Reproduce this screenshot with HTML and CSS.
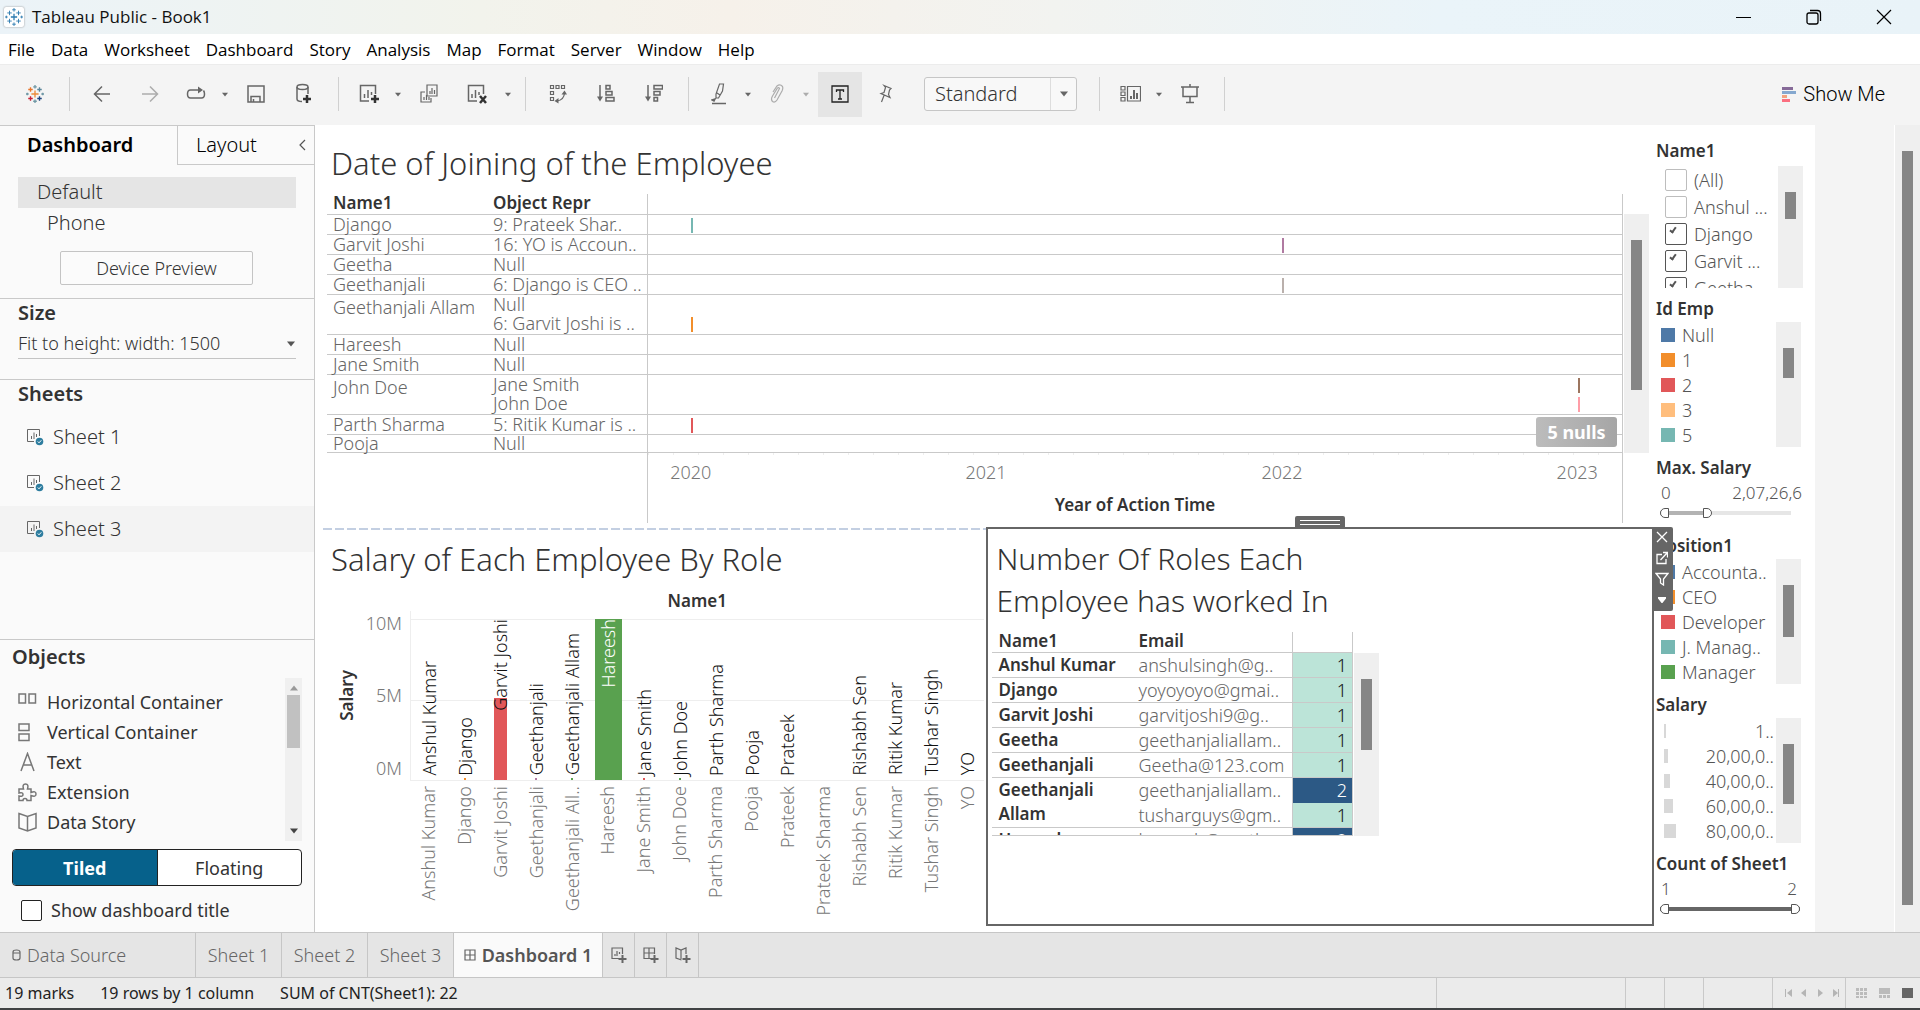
FILE: index.html
```html
<!DOCTYPE html>
<html lang="en">
<head>
<meta charset="utf-8">
<title>Tableau Public - Book1</title>
<link rel="stylesheet" href="styles.css">
</head>
<body>
<svg class="defs" aria-hidden="true">
  <symbol id="caret" viewBox="0 0 8 6"><path d="M0 0.500h8L4 5.500z" fill="currentColor"/></symbol>
  <symbol id="sheet" viewBox="0 0 18 18"><path d="M8 13.500H1.500v-12h12V8M5.500 11V8M8 11V4.500M10.500 9V6" fill="none" stroke="#666"/><circle cx="13.500" cy="13.500" r="3.800" fill="#2e7d9f"/><path d="M11.800 13.500l1.200 1.300 2.300-2.500" fill="none" stroke="#fff"/></symbol>
  <symbol id="marks" viewBox="0 0 20 20"><path d="M10 6.500v7M6.500 10h7" stroke-width="1.400"/><path d="M5 3v5M2.500 5.500h5M15 3v5M12.500 5.500h5M5 12v5M2.500 14.500h5M15 12v5M12.500 14.500h5M10 0v4M8 2h4M10 16v4M8 18h4M1.500 8.500v3M0 10h3M18.500 8.500v3M17 10h3" /></symbol>
</svg>

<header class="titlebar">
  <svg class="app-icon" width="20" height="20" stroke="#2b7bb0"><use href="#marks"/></svg>
  <span class="title">Tableau Public - Book1</span>
  <div class="window-buttons">
    <button aria-label="Minimize"><svg width="16" height="16"><path d="M0 8.500h15" stroke="#000"/></svg></button>
    <button aria-label="Restore"><svg width="16" height="16" fill="none" stroke="#000" stroke-width="1.300"><rect x="1" y="4" width="11" height="11" rx="2"/><path d="M4 1.500h7.500q3 0 3 3V12"/></svg></button>
    <button aria-label="Close"><svg width="16" height="16"><path d="M1 1l14 14M15 1L1 15" stroke="#000" stroke-width="1.200"/></svg></button>
  </div>
</header>

<nav class="menubar">
  <a href="#">File</a><a href="#">Data</a><a href="#">Worksheet</a><a href="#">Dashboard</a><a href="#">Story</a><a href="#">Analysis</a><a href="#">Map</a><a href="#">Format</a><a href="#">Server</a><a href="#">Window</a><a href="#">Help</a>
</nav>

<div class="toolbar">
  <button class="tool home" aria-label="Start page"><svg width="18" height="22" viewBox="0 0 20 20" fill="none" stroke-width="1.500"><path d="M10 6v8M6 10h8" stroke="#eb8a3a"/><path d="M5 2.500v5M2.500 5h5" stroke="#e8762c"/><path d="M15 2.500v5M12.500 5h5" stroke="#5b879b"/><path d="M5 12.500v5M2.500 15h5" stroke="#c72035"/><path d="M15 12.500v5M12.500 15h5" stroke="#1f447e"/><path d="M10 0v4M8 2h4M10 16v4M8 18h4M1.500 8.500v3M0 10h3M18.500 8.500v3M17 10h3" stroke="#7199a6"/></svg></button>
  <span class="sep"></span>
  <button class="tool" aria-label="Back"><svg width="18" height="18"><path d="M17 9H2M9 1.500L1.500 9 9 16.500"/></svg></button>
  <button class="tool off" aria-label="Forward"><svg width="18" height="18"><path d="M1 9h15M9 1.500L16.500 9 9 16.500"/></svg></button>
  <button class="tool mid" aria-label="Redo"><svg width="20" height="16"><path d="M12 4H4.500Q1.500 4 1.500 8t3 4h11q3 0 3-4 0-2-1-3.500M10 4h3"/><path d="M12 .500l5 3.500-5 3.500z" class="solid"/></svg></button>
  <button class="drop" aria-label="Redo options"><svg width="6" height="5"><use href="#caret"/></svg></button>
  <button class="tool" aria-label="Save"><svg width="18" height="18"><path d="M1 1h16v16H1zM4 17v-5.500h9V17M6.500 14v3"/></svg></button>
  <button class="tool" aria-label="New data source"><svg width="18" height="22"><ellipse cx="7.500" cy="4" rx="5.500" ry="2.500"/><path d="M2 4v12q0 2.500 5 2.500M13 4v7"/><path d="M12 12v8M8 16h8" class="thick"/></svg></button>
  <span class="sep"></span>
  <button class="tool mid" aria-label="New worksheet"><svg width="21" height="20"><path d="M10 17H1.500V1.500h15V10M5.500 14v-4M9 14V6M12.500 11V8"/><path d="M16 11v8M12 15h8" class="thick"/></svg></button>
  <button class="drop" aria-label="New worksheet options"><svg width="6" height="5"><use href="#caret"/></svg></button>
  <button class="tool" aria-label="Duplicate"><svg width="18" height="20"><path d="M7 1h10v11H7zM10 10V7M12 10V4M14.500 10V6M5 8H1v10h10v-4M4 16v-3M6.500 16v-5M9 16v-3" stroke-width="1.200"/></svg></button>
  <button class="tool" aria-label="Clear"><svg width="20" height="22"><path d="M10 18H1.500V2.500h15V11M5 15v-4M8.500 15V7M12 12V9"/><path d="M13 13l6 7M19 13l-6 7" class="thick"/></svg></button>
  <button class="drop" aria-label="Clear options"><svg width="6" height="5"><use href="#caret"/></svg></button>
  <span class="sep"></span>
  <button class="tool" aria-label="Swap rows and columns"><svg width="18" height="20"><path d="M1.500 1.500h3v3h-3zM7 1.500h3v3H7zM12.500 1.500h3v3h-3zM1.500 7.500h3v3h-3zM1.500 13.500h3v3h-3zM8 17q7-1 7.500-8" stroke-width="1.200"/><path d="M12.500 10.500l3-4 2.500 4zM9.500 14l-4 3 4 2.500z" class="solid"/></svg></button>
  <button class="tool" aria-label="Sort ascending"><svg width="18" height="20"><path d="M3 1v14M9 1.500h4v3.500H9zM9 7.500h6V11H9zM9 13.500h8V17H9z"/><path d="M0 12.500h6l-3 5z" class="solid"/></svg></button>
  <button class="tool" aria-label="Sort descending"><svg width="18" height="20"><path d="M3 1v14M9 1.500h8.500v3.500H9zM9 7.500h6V11H9zM9 13.500h3.500V17H9z"/><path d="M0 12.500h6l-3 5z" class="solid"/></svg></button>
  <span class="sep"></span>
  <button class="tool mid" aria-label="Highlight"><svg width="16" height="22"><path d="M8.500 1h4l-1 7-4 7H5V11zM6 10l3 2" stroke-width="1.200"/><path d="M1 17l3-1-1 2zM1 20.500h14" /></svg></button>
  <button class="drop" aria-label="Highlight options"><svg width="6" height="5"><use href="#caret"/></svg></button>
  <button class="tool mid off" aria-label="Group"><svg width="14" height="20"><path d="M3 8l4-6q3-2.500 5.500.500.800 2-.500 4.500L7 16q-2 3-4.500 1.500Q.500 15.500 2.500 12l5-8q1.500-1 2 .500L4.500 14" stroke-width="1.200"/></svg></button>
  <button class="drop off" aria-label="Group options"><svg width="6" height="5"><use href="#caret"/></svg></button>
  <button class="tool mid pressed" aria-label="Show labels"><svg width="18" height="20"><path d="M1 2h16v16H1zM5.500 8V6h7v2M9 6v9M7 15h4" stroke="#222" stroke-width="1.300"/></svg></button>
  <button class="tool" aria-label="Pin"><svg width="16" height="20"><path d="M6 1.500l7 3-1.500 1.500-1 4.500 1.500 3-9-4 3-1 1.500-5zM6 11.500L3.500 18" stroke-width="1.200"/></svg></button>
  <span class="fit">
    <select aria-label="Fit"><option>Standard</option></select>
    <svg width="8" height="6"><use href="#caret"/></svg>
  </span>
  <span class="sep"></span>
  <button class="tool mid" aria-label="Show cards"><svg width="21" height="18"><path d="M1 1.500h4v3.500H1zM1 7h4v3.500H1zM1 12.500h4V16H1zM7.500 1.500h13V16h-13z" stroke-width="1.200"/><path d="M11 14v-3M14 14V5M17 14V8" stroke-width="2"/></svg></button>
  <button class="drop" aria-label="Card options"><svg width="6" height="5"><use href="#caret"/></svg></button>
  <button class="tool" aria-label="Presentation mode"><svg width="18" height="20"><path d="M0 3h18M2 3v9.500h14V3M9 0v3M9 12.500V18M5 18.500h8"/></svg></button>
  <span class="sep"></span>
  <button class="show-me"><svg width="14" height="15"><path d="M0 0h11v3H0z" fill="#866a98"/><path d="M0 4h14v3H0z" fill="#85a8cf"/><path d="M0 8h5v3H0z" fill="#f2a27e"/><path d="M0 12h8v3H0z" fill="#fb6f80"/></svg>Show Me</button>
</div>

<div class="workspace">
  <aside class="sidebar">
    <div class="pane-tabs">
      <button class="pane-tab active">Dashboard</button>
      <button class="pane-tab">Layout<svg width="7" height="12"><path d="M6 1L1 6l5 5" fill="none" stroke="#555" stroke-width="1.200"/></svg></button>
    </div>
    <div class="devices">
      <div class="device chosen">Default</div>
      <div class="device phone">Phone</div>
      <button class="preview">Device Preview</button>
    </div>
    <section class="size">
      <h2><label for="size">Size</label></h2>
      <div class="size-box"><select id="size"><option>Fit to height: width: 1500</option></select><svg width="8" height="6"><use href="#caret"/></svg></div>
    </section>
    <section class="sheets">
      <h2>Sheets</h2>
      <a class="sheet" href="#"><svg width="18" height="18"><use href="#sheet"/></svg>Sheet 1</a>
      <a class="sheet" href="#"><svg width="18" height="18"><use href="#sheet"/></svg>Sheet 2</a>
      <a class="sheet hover" href="#"><svg width="18" height="18"><use href="#sheet"/></svg>Sheet 3</a>
    </section>
    <section class="objects">
      <h2>Objects</h2>
      <div class="object-box">
        <ul>
          <li><svg width="20" height="20"><path d="M1 2h6.500v9H1zM11 2h6.500v9H11z"/></svg>Horizontal Container</li>
          <li><svg width="20" height="20"><path d="M1 2h10v6.500H1zM1 12h10v6.500H1z"/></svg>Vertical Container</li>
          <li><svg width="20" height="20"><path d="M3 19L9.500 1.500 16 19M5.500 13h8"/></svg>Text</li>
          <li><svg width="20" height="20"><path d="M1 7h4.500Q4 2 7.500 2T9.500 7H13v3.500q5-2 5 1.500t-5 1.500V18.500H9q0-2-2-2t-2 2H1V14q4 1 4-1.500T1 11z"/></svg>Extension</li>
          <li><svg width="20" height="20"><path d="M1 1.500l8.500 3 8.500-3v14.500l-8.500 3-8.500-3zM9.500 4.500V19"/></svg>Data Story</li>
        </ul>
        <div class="list-scroll"><svg width="8" height="6" class="up"><use href="#caret"/></svg><span></span><svg width="8" height="6" class="down"><use href="#caret"/></svg></div>
      </div>
      <div class="mode"><button class="on">Tiled</button><button>Floating</button></div>
      <label class="show-title"><input type="checkbox">Show dashboard title</label>
    </section>
  </aside>

  <main class="canvas">
    <div class="dashboard">
      <div class="views">
        <section class="joining">
          <h1>Date of Joining of the Employee</h1>
          <div class="with-scroll">
            <table class="timeline">
              <colgroup><col class="c-name"><col class="c-repr"><col></colgroup>
              <thead><tr><th>Name1</th><th>Object Repr</th><th class="pane"></th></tr></thead>
              <tbody>
                <tr><td>Django</td><td>9: Prateek Shar..</td><td class="pane"><i class="teal" style="left:4.5%"></i></td></tr>
                <tr><td>Garvit Joshi</td><td>16: YO is Accoun..</td><td class="pane"><i class="purple" style="left:65.1%"></i></td></tr>
                <tr><td>Geetha</td><td>Null</td><td class="pane"></td></tr>
                <tr><td>Geethanjali</td><td>6: Django is CEO ..</td><td class="pane"><i class="grey" style="left:65.1%"></i></td></tr>
                <tr><td rowspan="2" class="tall">Geethanjali Allam</td><td class="open">Null</td><td class="pane open"></td></tr>
                <tr><td>6: Garvit Joshi is ..</td><td class="pane"><i class="orange" style="left:4.5%"></i></td></tr>
                <tr><td>Hareesh</td><td>Null</td><td class="pane"></td></tr>
                <tr><td>Jane Smith</td><td>Null</td><td class="pane"></td></tr>
                <tr><td rowspan="2" class="tall">John Doe</td><td class="open">Jane Smith</td><td class="pane open"><i class="brown" style="left:95.5%"></i></td></tr>
                <tr><td>John Doe</td><td class="pane"><i class="pink" style="left:95.5%"></i></td></tr>
                <tr><td>Parth Sharma</td><td>5: Ritik Kumar is ..</td><td class="pane"><i class="red" style="left:4.5%"></i></td></tr>
                <tr class="last"><td>Pooja</td><td>Null</td><td class="pane"></td></tr>
              </tbody>
            </table>
            <button class="nulls">5 nulls</button>
            <div class="scroll main-scroll"><span></span></div>
          </div>
          <div class="time-axis">
            <span style="left:4.4%">2020</span><span style="left:34.7%">2021</span><span style="left:65.1%">2022</span><span style="left:95.4%">2023</span>
            <b>Year of Action Time</b>
          </div>
        </section>

        <section class="salary">
          <h1>Salary of Each Employee By Role</h1>
          <div class="chart">
            <div class="chart-head">Name1</div>
            <div class="y-title"><span>Salary</span></div>
            <div class="y-axis"><span>10M</span><span>5M</span><span>0M</span></div>
            <div class="plot">
              <div class="col"><em>Anshul Kumar</em></div>
              <div class="col"><i class="bar dot orange"></i><em>Django</em></div>
              <div class="col"><i class="bar red" style="height:48%;width:13px"></i><em class="mid-bar">Garvit Joshi</em></div>
              <div class="col"><i class="bar dot purple"></i><em>Geethanjali</em></div>
              <div class="col"><i class="bar dot green"></i><em>Geethanjali Allam</em></div>
              <div class="col"><i class="bar green" style="height:95%;width:27px"></i><em class="in-bar">Hareesh</em></div>
              <div class="col"><i class="bar dot red"></i><em>Jane Smith</em></div>
              <div class="col"><i class="bar dot green"></i><em>John Doe</em></div>
              <div class="col"><em>Parth Sharma</em></div>
              <div class="col"><em>Pooja</em></div>
              <div class="col"><em>Prateek</em></div>
              <div class="col"></div>
              <div class="col"><em>Rishabh Sen</em></div>
              <div class="col"><em>Ritik Kumar</em></div>
              <div class="col"><em>Tushar Singh</em></div>
              <div class="col"><em>YO</em></div>
            </div>
            <div class="x-axis">
              <span>Anshul Kumar</span><span>Django</span><span>Garvit Joshi</span><span>Geethanjali</span><span>Geethanjali All..</span><span>Hareesh</span><span>Jane Smith</span><span>John Doe</span><span>Parth Sharma</span><span>Pooja</span><span>Prateek</span><span>Prateek Sharma</span><span>Rishabh Sen</span><span>Ritik Kumar</span><span>Tushar Singh</span><span>YO</span>
            </div>
          </div>
        </section>

        <section class="roles">
          <span class="grip"></span>
          <div class="zone-tools">
            <button aria-label="Remove"><svg width="12" height="12"><path d="M1 1l10 10M11 1L1 11"/></svg></button>
            <button aria-label="Go to sheet"><svg width="12" height="14"><path d="M6 3.500H1v9h9V8M4.500 9L11 2M7 1.500h4.500v5"/></svg></button>
            <button aria-label="Use as filter"><svg width="14" height="14"><path d="M1 1.500h12L8.500 7v6l-3-2V7z"/></svg></button>
            <button aria-label="More options"><svg width="8" height="6"><use href="#caret"/></svg></button>
          </div>
          <h1>Number Of Roles Each<br>Employee has worked In</h1>
          <div class="with-scroll roles-box">
            <div class="clip">
              <table class="counts">
                <colgroup><col class="n"><col class="e"><col class="v"></colgroup>
                <thead><tr><th>Name1</th><th>Email</th><th class="val"></th></tr></thead>
                <tbody>
                  <tr><th>Anshul Kumar</th><td>anshulsingh@g..</td><td class="val">1</td></tr>
                  <tr><th>Django</th><td>yoyoyoyo@gmai..</td><td class="val">1</td></tr>
                  <tr><th>Garvit Joshi</th><td>garvitjoshi9@g..</td><td class="val">1</td></tr>
                  <tr><th>Geetha</th><td>geethanjaliallam..</td><td class="val">1</td></tr>
                  <tr><th>Geethanjali</th><td>Geetha@123.com</td><td class="val">1</td></tr>
                  <tr><th rowspan="2">Geethanjali Allam</th><td class="open">geethanjaliallam..</td><td class="val two open">2</td></tr>
                  <tr><td>tusharguys@gm..</td><td class="val">1</td></tr>
                  <tr><th>Hareesh</th><td>hareesh@exath..</td><td class="val two">2</td></tr>
                </tbody>
              </table>
            </div>
            <div class="scroll"><span></span></div>
          </div>
        </section>
      </div>

      <aside class="legends">
        <section class="filter">
          <h3>Name1</h3>
          <div class="with-scroll names">
            <div class="items">
              <label><input type="checkbox">(All)</label>
              <label><input type="checkbox">Anshul ...</label>
              <label><input type="checkbox" checked>Django</label>
              <label><input type="checkbox" checked>Garvit ...</label>
              <label><input type="checkbox" checked>Geetha</label>
            </div>
            <div class="scroll"><span></span></div>
          </div>
        </section>
        <section>
          <h3>Id Emp</h3>
          <div class="with-scroll ids">
            <ul class="items"><li><i class="blue"></i>Null</li><li><i class="orange"></i>1</li><li><i class="red"></i>2</li><li><i class="peach"></i>3</li><li><i class="teal"></i>5</li></ul>
            <div class="scroll"><span></span></div>
          </div>
        </section>
        <section class="range-section">
          <h3>Max. Salary</h3>
          <div class="values"><span>0</span><span>2,07,26,6</span></div>
          <div class="range part"><input type="range" class="low" min="0" max="100" value="0" aria-label="Minimum salary"><input type="range" class="high" min="0" max="100" value="35" aria-label="Maximum salary"></div>
        </section>
        <section>
          <h3>Position1</h3>
          <div class="with-scroll positions">
            <ul class="items"><li><i class="blue"></i>Accounta..</li><li><i class="orange"></i>CEO</li><li><i class="red"></i>Developer</li><li><i class="teal"></i>J. Manag..</li><li><i class="green"></i>Manager</li></ul>
            <div class="scroll"><span></span></div>
          </div>
        </section>
        <section>
          <h3>Salary</h3>
          <div class="with-scroll sizes">
            <ul class="items"><li><i style="width:2px"></i>1..</li><li><i style="width:4px"></i>20,00,0..</li><li><i style="width:6px"></i>40,00,0..</li><li><i style="width:9px"></i>60,00,0..</li><li><i style="width:12px"></i>80,00,0..</li></ul>
            <div class="scroll"><span></span></div>
          </div>
        </section>
        <section>
          <h3>Count of Sheet1</h3>
          <div class="values"><span>1</span><span>2</span></div>
          <div class="range"><input type="range" class="low" min="0" max="100" value="0" aria-label="Minimum count"><input type="range" class="high" min="0" max="100" value="100" aria-label="Maximum count"></div>
        </section>
      </aside>
    </div>
    <div class="page-scroll"><span></span></div>
  </main>
</div>

<nav class="tabs">
  <a class="source" href="#"><svg width="9" height="12"><path d="M1 3q0-2 3.500-2T8 3v6q0 2-3.500 2T1 9zM1 4h7"/></svg>Data Source</a>
  <a href="#">Sheet 1</a><a href="#">Sheet 2</a><a href="#">Sheet 3</a>
  <a class="current" href="#"><svg width="12" height="12"><path d="M1 1h10v10H1zM6 1v10M1 6h10"/></svg>Dashboard 1</a>
  <button aria-label="New worksheet"><svg width="16" height="16"><path d="M8 11.500H1V1h10.500v6M4 9V7M6 9V4M8.500 7V5"/><path d="M11.500 8v8M7.500 12h8" stroke-width="2"/></svg></button>
  <button aria-label="New dashboard"><svg width="16" height="16"><path d="M8 11.500H1V1h10.500v6M6 1v10M1 6h10.500"/><path d="M11.500 8v8M7.500 12h8" stroke-width="2"/></svg></button>
  <button aria-label="New story"><svg width="16" height="16"><path d="M6.500 13L1 11V1l5 2 5-2v6M6 3v9"/><path d="M11.500 8v8M7.500 12h8" stroke-width="2"/></svg></button>
</nav>

<footer class="status">
  <span>19 marks</span><span>19 rows by 1 column</span><span>SUM of CNT(Sheet1): 22</span>
  <div class="cells">
    <div class="cell-a"></div><div class="cell-b"></div><div class="cell-b"></div><div class="cell-c"></div>
    <div class="cell-nav"><svg width="54" height="8" fill="#b5b5b5"><path d="M0 0h1v8H0zM7 0v8L2 4zM21 0v8l-5-4zM33 0v8l5-4zM48 0v8l5-4zM53 0h1v8h-1z"/></svg></div>
    <div class="cell-view"><svg width="58" height="10"><path d="M0 0h3v3H0zM4 0h3v3H4zM8 0h3v3H8zM0 4h3v3H0zM4 4h3v3H4zM8 4h3v3H8zM0 8h3v2H0zM4 8h3v2H4zM8 8h3v2H8zM23 0h11v6H23zM23 7h3v3h-3zM27 7h3v3h-3zM31 7h3v3h-3z" fill="#bbb"/><path d="M46 0h11v10H46z" fill="#666"/></svg></div>
  </div>
</footer>
</body>
</html>
```
FILE: styles.css
```css
* { box-sizing: border-box; }
body {
  margin: 0; min-height: 100vh; display: flex; flex-direction: column;
  font-family: "Noto Sans", "Open Sans", sans-serif; font-size: 18px; font-weight: 350; line-height: 24px;
  color: #333; background: #fff;
}
h1, h2, h3, ul { margin: 0; padding: 0; font-weight: inherit; }
ul { list-style: none; }
a { color: inherit; text-decoration: none; }
button, select, input { font: inherit; color: inherit; margin: 0; }
button { border: 0; background: none; padding: 0; }
svg { display: block; flex: none; }
.defs { position: absolute; width: 0; height: 0; }

.titlebar { display: flex; align-items: center; height: 34px; padding-left: 4px; font-family: "Open Sans", sans-serif; font-weight: 400; font-size: 17px; color: #111;
  background: linear-gradient(90deg, #ebf3f8, #f2f3ec 25%, #f6f1ea 38%, #f2f3f0 55%, #eaf4f9 75%, #e9f3f8); }
.app-icon { background: #fff; fill: none; border-radius: 2px; box-shadow: 0 0 2px #888; padding: 1px; }
.title { margin-left: 8px; }
.window-buttons { display: flex; margin: 0 1px 0 auto; }
.window-buttons button { width: 70px; height: 34px; display: grid; place-items: center; }

.menubar { display: flex; gap: 16px; align-items: center; height: 30px; padding: 2px 8px 0; font-family: "Open Sans", sans-serif; font-weight: 400; font-size: 17px; color: #000; }

.toolbar { display: flex; align-items: center; height: 61px; padding-bottom: 2px; background: #f4f4f4; border-top: 1px solid #ececec; color: #666; }
.toolbar svg { fill: none; stroke: #666; stroke-width: 1.500; }
.tool, .drop { display: grid; place-items: center; height: 45px; width: 48px; flex: none; }
.tool.mid { width: 44px; }
.tool.home { width: 59px; padding-left: 10px; }
.tool .solid { fill: #666; stroke: none; }
.tool .thick { stroke: #333; stroke-width: 2.500; }
.drop { width: 14px; }
.toolbar .drop svg, .fit svg { stroke: none; }
.toolbar .off { opacity: .5; }
.toolbar .pressed { background: #e5e5e5; margin-left: 5px; }
.sep { width: 1px; height: 34px; background: #d0d0d0; margin: 0 8px 0 10px; flex: none; }
.fit { position: relative; width: 153px; margin: 0 12px 0 14px; }
.fit select { appearance: none; width: 100%; height: 34px; padding: 0 10px; border: 1px solid #c6c6c6; border-radius: 3px; font-size: 20px; color: #333;
  background: linear-gradient(#ddd, #ddd) right 25px top / 1px 100% no-repeat #f8f8f8; }
.fit svg { position: absolute; right: 9px; top: 14px; }
.show-me { display: flex; align-items: center; gap: 7px; margin: 0 35px 0 auto; font-family: Roboto, sans-serif; font-size: 20px; color: #000; }
.show-me svg { stroke: none; }

.workspace { flex: 1; display: flex; min-height: 0; }
.sidebar { width: 315px; flex: none; display: flex; flex-direction: column; background: #fafafa; border: 1px solid #c9c9c9; border-width: 1px 1px 0 0; }
.sidebar h2 { font-size: 20px; font-weight: 600; line-height: 28px; padding-bottom: 2px; }
.pane-tabs { display: flex; font-size: 20px; color: #000; }
.pane-tab { display: flex; align-items: center; justify-content: space-between; height: 39px; flex: 1; border: 1px solid #c9c9c9; border-width: 0 0 1px 1px; padding: 0 8px 0 18px; }
.pane-tab.active { flex: none; width: 177px; font-weight: 600; padding: 0 0 2px 27px; border: 0; }
.devices { padding: 12px 18px 13px; border-bottom: 1px solid #c9c9c9; font-size: 20px; }
.device { line-height: 30px; padding: 0 0 1px 19px; }
.device.phone { padding-left: 29px; }
.device.chosen { background: #e5e5e5; }
.preview { display: block; width: 193px; height: 34px; margin: 12px auto 0 42px; border: 1px solid #c4c4c4; border-radius: 2px; font-size: 18px; background: #fbfbfb; }
.size { padding: 0 18px 20px; border-bottom: 1px solid #c9c9c9; }
.size-box { position: relative; border-bottom: 1px solid #c4c4c4; }
.size-box select { appearance: none; width: 100%; height: 29px; border: 0; padding: 0 0 2px; background: none; font-size: 18px; }
.size-box svg { position: absolute; right: 1px; top: 12px; color: #555; }
.sheets h2 { padding: 0 0 6px 18px; }
.sheet { display: flex; align-items: center; gap: 9px; height: 46px; padding-left: 26px; font-size: 20px; }
.sheet.hover { background: #f3f3f3; }
.objects { margin-top: auto; border-top: 1px solid #c9c9c9; padding: 3px 12px 5px; font-weight: 400; }
.object-box { display: flex; justify-content: space-between; margin: 5px 0 8px; }
.object-box ul { padding: 9px 0 4px 6px; }
.object-box li { display: flex; align-items: center; gap: 9px; height: 30px; }
.object-box li svg { fill: none; stroke: #777; stroke-width: 1.500; }
.list-scroll { display: flex; flex-direction: column; align-items: center; width: 17px; padding: 7px 0; background: #f0f0f0; }
.list-scroll span { width: 13px; height: 53px; background: #c1c1c1; margin-top: 4px; }
.list-scroll .up { transform: rotate(180deg); color: #999; }
.list-scroll .down { margin-top: auto; color: #444; }
.mode { display: flex; height: 37px; border: 1px solid #222; border-radius: 4px; background: #fff; overflow: hidden; }
.mode button { flex: 1; }
.mode .on { background: #06618b; color: #fff; font-weight: 700; border-right: 1px solid #222; }
.show-title { display: flex; align-items: center; gap: 9px; margin: 12px 0 5px 9px; }
input[type=checkbox] { appearance: none; flex: none; width: 22px; height: 22px; border: 1px solid #bdbdbd; border-radius: 2px; background: #fff; position: relative; }
.show-title input[type=checkbox] { border-color: #222; width: 21px; height: 21px; }
input[type=checkbox]:checked { border-color: #555; }
input:checked::after { content: ""; position: absolute; left: 5px; top: 2px; width: 4px; height: 7px; border: solid #555; border-width: 0 2px 2px 0; transform: rotate(35deg); box-sizing: border-box; }

.canvas { flex: 1; display: flex; background: #f4f4f4; min-width: 0; }
.dashboard { flex: 1; display: flex; background: #fff; margin-right: 79px; padding-left: 8px; min-width: 0; }
.views { flex: 1; display: grid; grid-template-columns: 663fr 668fr; grid-template-rows: auto 1fr; min-width: 0; }
.views h1 { font-size: 31px; line-height: 42px; color: #333; white-space: nowrap; }
.views .roles h1 { font-size: 30px; }
.with-scroll { display: flex; position: relative; }
.scroll { width: 25px; flex: none; background: #efefef; padding: 26px 7px 0; }
.scroll span { display: block; background: #868686; }
.page-scroll { width: 26px; flex: none; border-left: 1px solid #fff; background: #efefef; padding: 26px 7px 27px; display: flex; }
.page-scroll span { flex: 1; background: #868686; }

.joining { grid-column: 1 / -1; padding: 17px 6px 5px 4px; }
.joining h1 { padding-left: 4px; margin-bottom: 10px; }
table { border-collapse: collapse; table-layout: fixed; }
.timeline { flex: 1; width: 100%; color: #666; margin-right: 1px; }
.timeline .c-name { width: 160px; }
.timeline .c-repr { width: 160px; }
.timeline th, .timeline td { height: 20px; line-height: 19px; padding: 0 0 0 6px; text-align: left; vertical-align: top; white-space: nowrap; border-bottom: 1px solid #c9c9c9; }
.timeline .last td { height: 18px; line-height: 17px; }
.timeline .tall { line-height: 25px; }
.timeline thead th { font-size: 17px; font-weight: 600; color: #333; line-height: 18px; }
.timeline .pane { position: relative; padding: 0; border-left: 1px solid #c9c9c9; border-right: 1px solid #c9c9c9; }
.timeline .open { border-bottom: 0; }
.timeline i { position: absolute; top: 3px; width: 2px; height: 15px; }
.nulls { position: absolute; right: 32px; bottom: 6px; width: 81px; height: 30px; border-radius: 3px; background: linear-gradient(90deg, #bcbcbc, #a6a6a6); color: #fff; font-weight: 700; }
.main-scroll { margin-top: 20px; }
.main-scroll span { height: 150px; }
.time-axis { position: relative; height: 70px; margin: 0 26px 0 320px; border: 1px solid #c9c9c9; border-width: 0 1px; color: #777; text-align: center;
  background: repeating-linear-gradient(90deg, #eee 0 1px, transparent 1px 25px) 0 0 / 100% 2px no-repeat; }
.time-axis span { position: absolute; top: 7px; line-height: 24px; transform: translateX(-50%); }
.time-axis b { display: block; padding-top: 42px; line-height: 20px; font-size: 17px; font-weight: 600; color: #333; }

.teal { background: #76b7b2; } .purple { background: #b07aa1; } .grey { background: #bab0ac; } .orange { background: #f28e2b; }
.brown { background: #9c755f; } .pink { background: #ff9da7; } .red { background: #e15759; } .green { background: #59a14f; }
.blue { background: #4e79a7; } .peach { background: #ffbe7d; }

.salary { padding: 10px 2px 0 0; background: repeating-linear-gradient(90deg, #c3cfe2 0 9px, transparent 9px 12px) 0 0 / 100% 2px no-repeat; min-width: 0; }
.salary h1 { padding-left: 8px; }
.chart { display: grid; grid-template-columns: 48px 39px 1fr; grid-template-rows: 31px 170px auto; }
.chart-head { grid-column: 3; text-align: center; font-weight: 600; font-size: 17px; line-height: 20px; padding-top: 11px; }
.y-title { display: grid; place-items: center; font-weight: 600; font-size: 17px; }
.y-title span, .col em, .x-axis span { writing-mode: vertical-rl; transform: rotate(180deg); white-space: nowrap; font-style: normal; }
.y-axis { display: flex; flex-direction: column; justify-content: space-between; align-items: flex-end; padding: 2px 8px 3px 0; line-height: 20px; color: #777; }
.plot, .x-axis { display: grid; grid-template-columns: repeat(16, 1fr); }
.plot { border-left: 1px solid #eee; border-bottom: 1px solid #eee; background: linear-gradient(#eee, #eee) 0 8px / 100% 1px no-repeat, linear-gradient(#eee, #eee) 0 89px / 100% 1px no-repeat; }
.col { position: relative; display: flex; flex-direction: column-reverse; align-items: center; color: #111; line-height: 26px; }
.col em { position: absolute; bottom: 4px; }
.col .mid-bar { bottom: 69px; left: 4px; }
.col .in-bar { bottom: auto; top: 8px; color: #fff; }
.dot { width: 2px; height: 2px; }
.x-axis { grid-column: 3; color: #777; }
.x-axis span { justify-self: center; align-self: start; line-height: 26px; padding-bottom: 5px; }

.roles { position: relative; border: 2px solid #666; margin: -1px 1px 6px 0; padding: 9px 4px 0; }
.roles h1 { padding-left: 4px; margin-bottom: 10px; }
.grip { position: absolute; left: 307px; top: -13px; width: 50px; height: 12px; border-radius: 2px 2px 0 0; border: solid #666; border-width: 4px 5px 3px; background: linear-gradient(#fff, #fff) 0 0 / 100% 1px no-repeat, linear-gradient(#fff, #fff) 0 4px / 100% 1px no-repeat #666; }
.zone-tools { position: absolute; left: 100%; top: -2px; z-index: 1; width: 21px; height: 84px; display: grid; grid-template-rows: repeat(4, 1fr); background: #666; border-radius: 0 2px 2px 0; color: #fff; }
.zone-tools button { display: grid; place-items: center; }
.zone-tools svg { fill: none; stroke: #fff; stroke-width: 1.300; }
.clip { height: 204px; overflow: hidden; border-bottom: 1px solid #c9c9c9; }
.counts { width: 360px; color: #666; }
.counts .n { width: 140px; } .counts .e { width: 160px; } .counts .v { width: 60px; }
.counts th, .counts td { height: 25px; line-height: 24px; padding: 0 0 0 6px; text-align: left; vertical-align: top; border-bottom: 1px solid #c9c9c9; white-space: nowrap; }
.counts th { font-weight: 600; font-size: 17px; color: #333; }
.counts tbody th { white-space: normal; }
.counts thead th { height: 21px; line-height: 18px; }
.counts .val { border-left: 1px solid #c9c9c9; border-right: 1px solid #c9c9c9; }
.counts td.val { background: #bce4d8; color: #111; text-align: right; padding-right: 5px; }
.counts td.two { background: #2c5985; color: #fff; }
.counts .open { border-bottom: 0; }
.roles-box .scroll { margin: 21px 0 0 1px; }
.roles-box .scroll span { height: 71px; }

.legends { width: 160px; flex: none; padding: 12px 12px 0 1px; color: #555; }
.legends section { margin-bottom: 7px; }
.legends h3 { font-size: 17px; font-weight: 600; line-height: 26px; padding-top: 1px; color: #333; }
.legends .with-scroll { height: 125px; padding-right: 2px; }
.legends .items { flex: 1; overflow: hidden; white-space: nowrap; }
.legends li { display: flex; align-items: center; gap: 7px; height: 25px; padding-left: 5px; }
.legends li i { width: 14px; height: 14px; }
.legends .filter .names { height: 122px; margin-top: 2px; padding-right: 0; }
.names label { display: flex; align-items: center; gap: 7px; height: 27px; padding-left: 9px; }
.names .scroll span { height: 27px; }
.ids .scroll span { height: 30px; }
.positions .scroll span { height: 52px; }
.sizes .scroll span { height: 60px; }
.legends .sizes li { justify-content: space-between; padding: 0 2px 0 8px; }
.legends .sizes li i { background: #d8d8d8; }
.values { display: flex; justify-content: space-between; line-height: 24px; padding: 0 6px 0 5px; font-size: 17px; }
.range-section .values { padding-right: 1px; }
.legends .range-section { margin-bottom: 14px; }
.range { position: relative; height: 10px; margin: 3px 3px 0 4px; background: linear-gradient(#666, #666) 0 3px / 100% 4px no-repeat; }
.range.part { margin-right: 12px; background: linear-gradient(#b3b3b3, #b3b3b3) 0 3px / 35% 4px no-repeat, linear-gradient(#e6e6e6, #e6e6e6) 0 3px / 100% 4px no-repeat; }
.range input { appearance: none; position: absolute; left: 0; top: 0; width: 100%; height: 10px; background: none; pointer-events: none; }
.range input::-webkit-slider-thumb { appearance: none; width: 9px; height: 10px; background: #fff; border: 1px solid #555; pointer-events: auto; }
.range .low::-webkit-slider-thumb { border-radius: 5px 0 0 5px; }
.range .high::-webkit-slider-thumb { border-radius: 0 5px 5px 0; }

.tabs { display: flex; height: 46px; background: #e5e5e5; border: 1px solid #c6c6c6; border-width: 1px 0; color: #666; }
.tabs a, .tabs button { display: flex; align-items: center; justify-content: center; gap: 6px; width: 86px; border-right: 1px solid #c6c6c6; }
.tabs svg { fill: none; stroke: #666; stroke-width: 1.200; }
.tabs .source { width: 196px; justify-content: flex-start; padding-left: 12px; }
.tabs .current { width: 149px; background: #fafafa; font-weight: 600; color: #555; }
.tabs button { width: 32px; }
.status { display: flex; align-items: center; gap: 26px; height: 32px; padding-left: 5px; background: #ebebeb; border-bottom: 2px solid #404244; font-size: 16px; font-weight: 400; color: #222; }
.cells { display: flex; align-self: stretch; margin-left: auto; }
.cells div { border-left: 1px solid #c9c9c9; display: grid; align-items: center; }
.cell-a { width: 189px; } .cell-b { width: 39px; } .cell-c { width: 69px; }
.cell-nav { width: 73px; padding-left: 12px; } .cell-view { width: 75px; padding-left: 10px; }
```
